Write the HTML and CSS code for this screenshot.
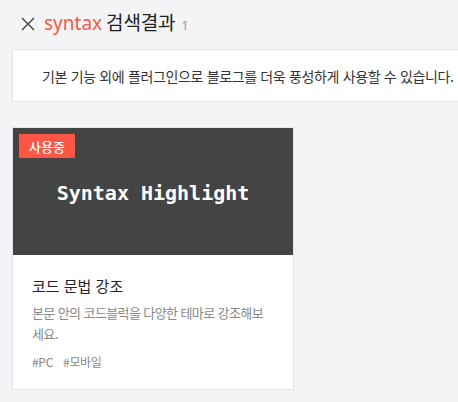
FILE: index.html
```html
<!DOCTYPE html>
<html lang="ko">
<head>
<meta charset="utf-8">
<link rel="stylesheet" href="styles.css">
</head>
<body>
<header class="search-head">
  <button class="close-btn" aria-label="닫기">
    <svg width="14" height="14" viewBox="0 0 14 14"><path d="M1 1L13 13M13 1L1 13" stroke="#444" stroke-width="1.4" fill="none"/></svg>
  </button>
  <h1 class="head-title"><span class="keyword">syntax</span> 검색결과<span class="count">1</span></h1>
</header>
<div class="info-box">기본 기능 외에 플러그인으로 블로그를 더욱 풍성하게 사용할 수 있습니다.</div>
<div class="card">
  <div class="card-thumb">
    <span class="badge">사용중</span>
    <span class="thumb-text">Syntax Highlight</span>
  </div>
  <div class="card-body">
    <h2 class="card-title">코드 문법 강조</h2>
    <p class="card-desc">본문 안의 코드블럭을 다양한 테마로 강조해보세요.</p>
    <div class="tags"><span>#PC</span><span>#모바일</span></div>
  </div>
</div>
</body>
</html>
```
FILE: styles.css
```css
* { box-sizing: border-box; }
body {
  margin: 0;
  background: #f3f4f6;
  font-family: "Noto Sans CJK KR", "Noto Sans", sans-serif;
  color: #222;
  overflow: hidden;
}
.search-head {
  display: flex;
  align-items: center;
  height: 49px;
  padding: 0 0 2px 21px;
}
.close-btn {
  border: 0;
  background: none;
  padding: 0;
  width: 14px;
  height: 14px;
  display: flex;
  margin-right: 9px;
}
.head-title {
  margin: 0;
  font-size: 19px;
  font-weight: 400;
  line-height: 24px;
  display: flex;
  align-items: baseline;
  letter-spacing: -0.2px;
}
.keyword { color: #ff5544; margin-right: 4px; font-family: "Noto Sans", sans-serif; letter-spacing: 0; }
.count {
  font-family: "Noto Sans", sans-serif;
  font-size: 13px;
  color: #8a9db3;
  margin-left: 6px;
  letter-spacing: 0;
}
.info-box {
  margin: 0 -20px 0 12px;
  height: 53px;
  background: #fff;
  border: 1px solid #e3e6eb;
  display: flex;
  align-items: center;
  padding-left: 29px;
  font-size: 14px;
  color: #333;
  letter-spacing: -0.35px;
}
.card {
  margin: 25px 0 0 12px;
  width: 282px;
  background: #fff;
  border: 1px solid #e1e4ea;
}
.card-thumb {
  position: relative;
  height: 127px;
  background: #444;
  display: flex;
  align-items: center;
  justify-content: center;
}
.badge {
  position: absolute;
  left: 6px;
  top: 6px;
  width: 56px;
  height: 24px;
  background: #ff5544;
  color: #fff;
  font-size: 13px;
  font-weight: 500;
  display: flex;
  align-items: center;
  justify-content: center;
}
.thumb-text {
  font-family: "DejaVu Sans Mono", monospace;
  font-weight: 700;
  font-size: 20px;
  color: #fff;
  margin-top: 2px;
}
.card-body { padding: 20px 19px 18px 19px; }
.card-title {
  margin: 0;
  font-size: 15px;
  font-weight: 400;
  line-height: 22px;
  color: #222;
  letter-spacing: 0;
}
.card-desc {
  margin: 5px 0 0;
  font-size: 13px;
  line-height: 21px;
  color: #888;
  letter-spacing: -0.6px;
}
.tags {
  margin-top: 9px;
  display: flex;
  gap: 10px;
  font-size: 12px;
  color: #888;
  line-height: 18px;
  letter-spacing: -0.3px;
}
```
